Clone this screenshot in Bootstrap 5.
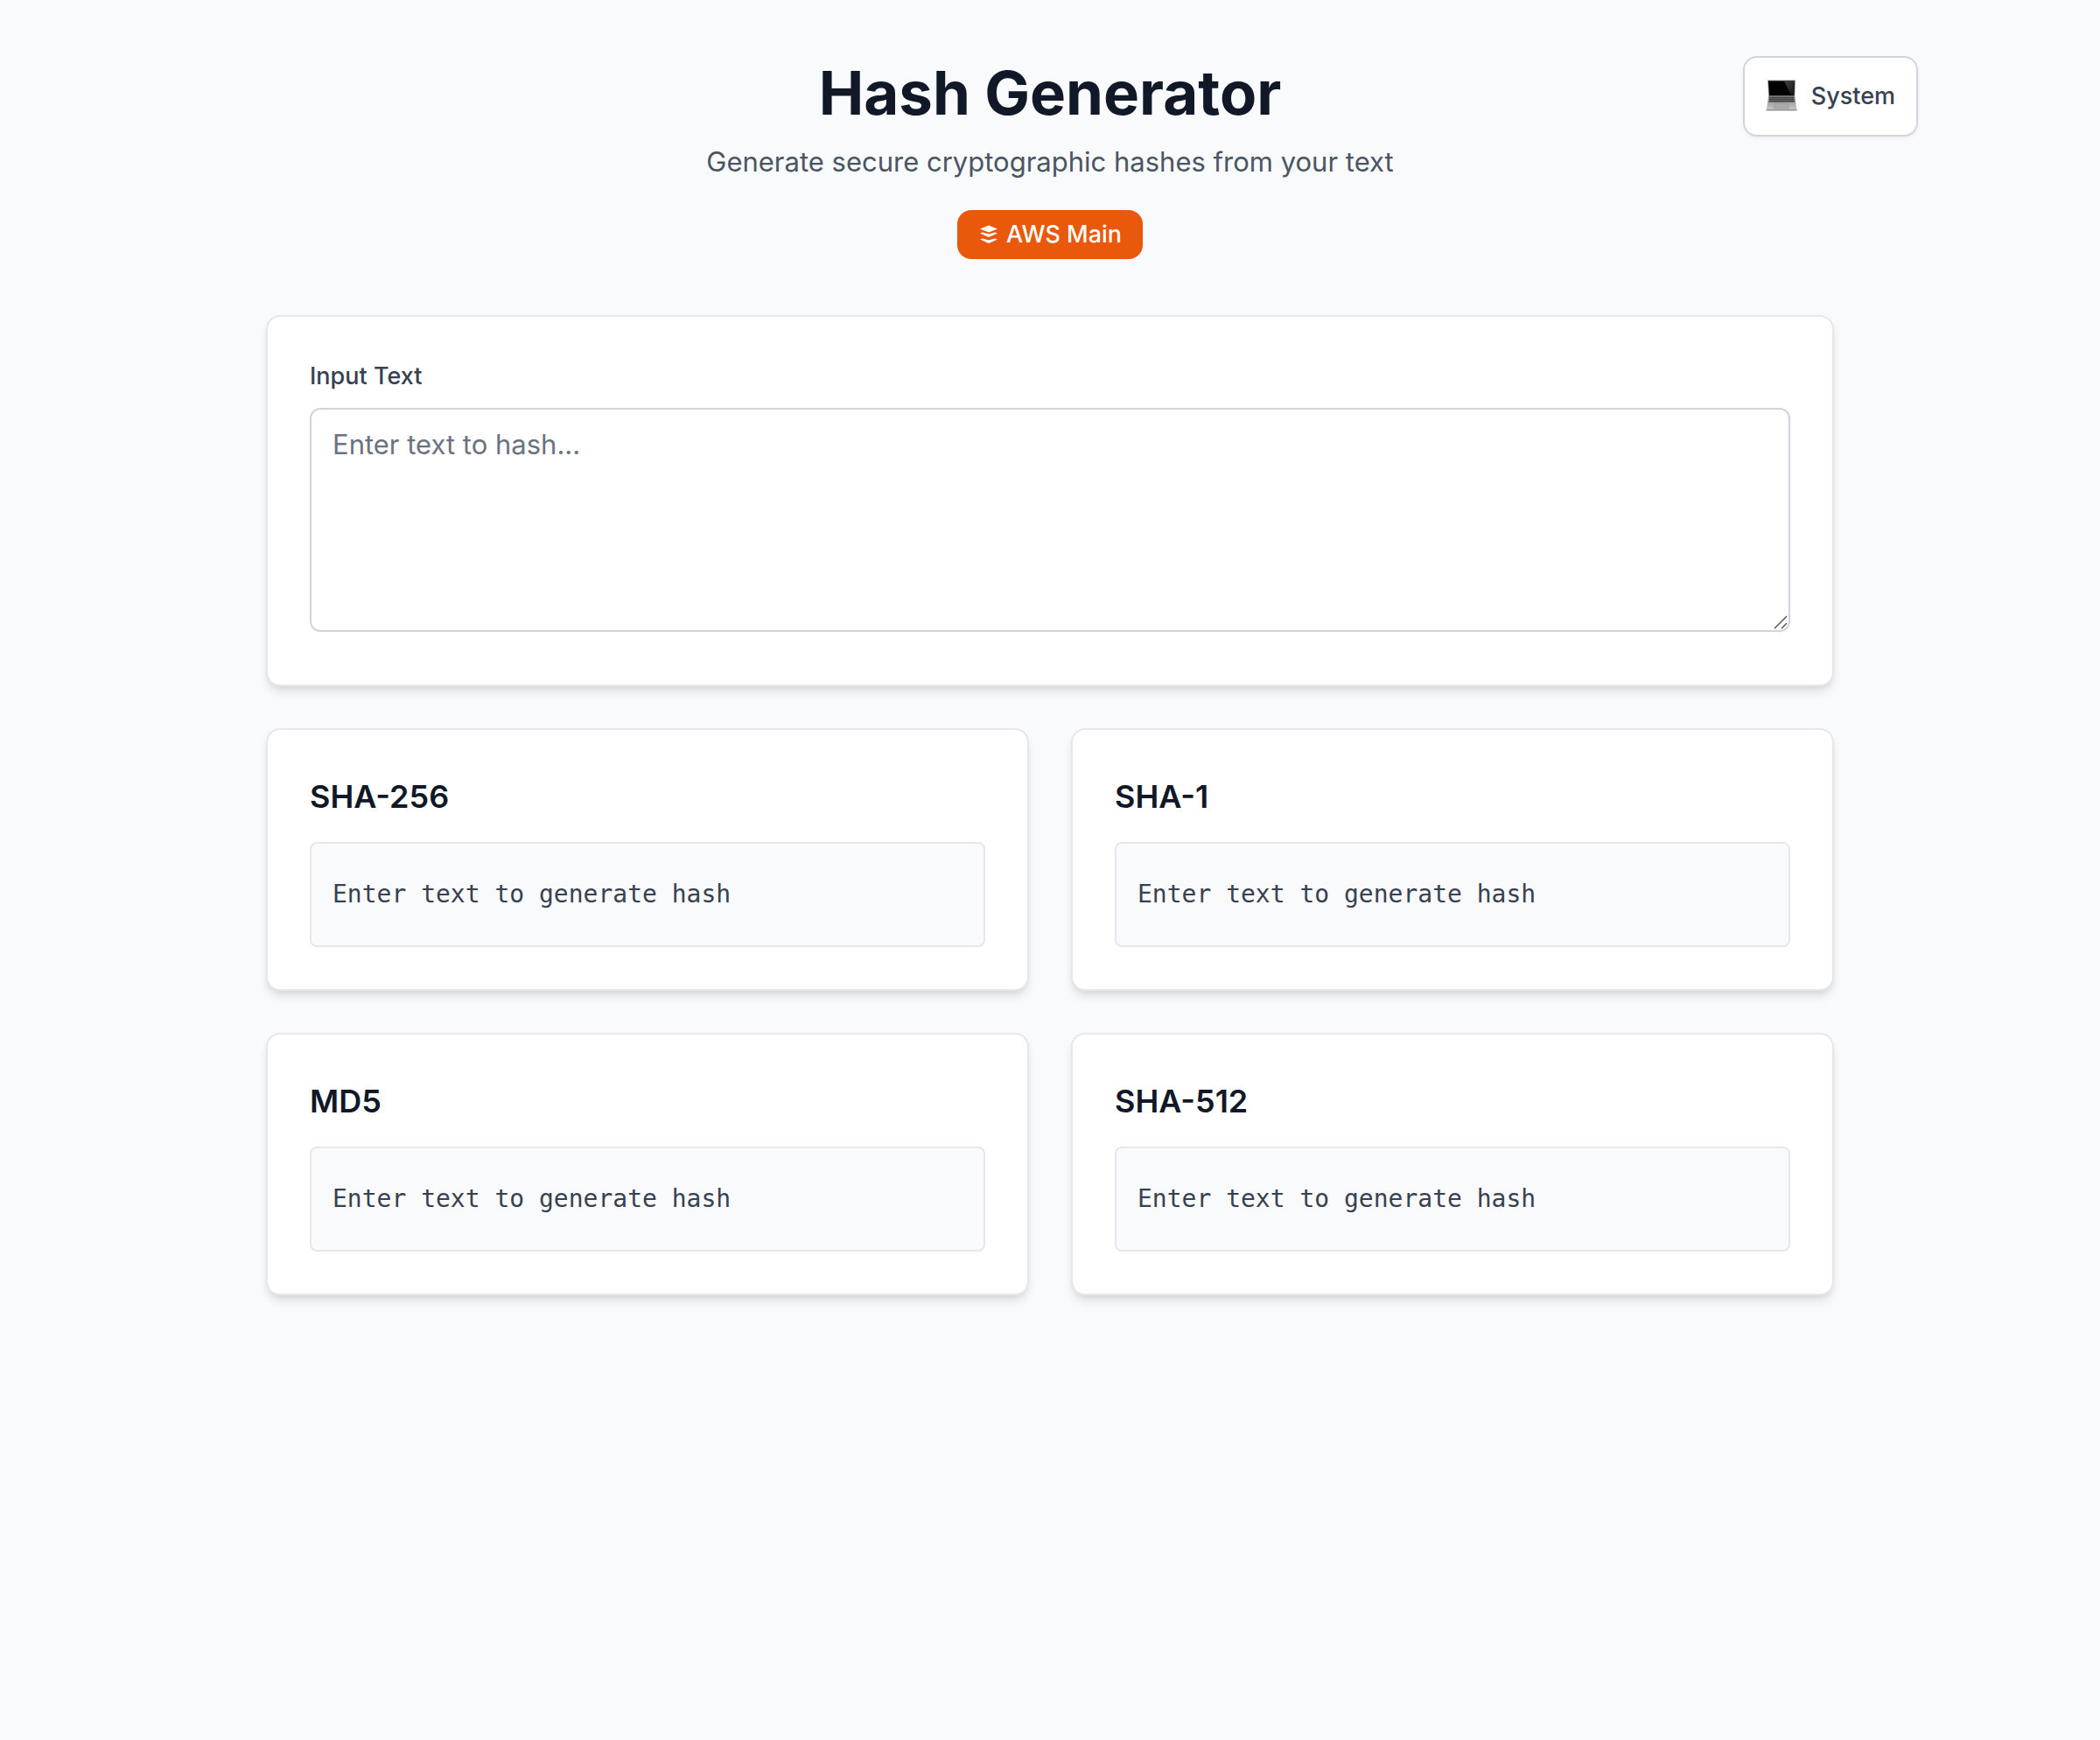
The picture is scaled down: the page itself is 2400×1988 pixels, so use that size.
<!DOCTYPE html>
<html lang="en">
<head>
<meta charset="utf-8">
<meta name="viewport" content="width=device-width, initial-scale=1">
<title>Hash Generator</title>
<link href="https://cdn.jsdelivr.net/npm/bootstrap@5.3.0/dist/css/bootstrap.min.css" rel="stylesheet">
<style>
  body { background: #f9fafb; color: #374151; font-family: Inter, "Liberation Sans", sans-serif; font-size: 27px; line-height: 40px; }
  .page-head { max-width: 2048px; padding: 64px 32px 0; }
  .head-grid { display: grid; grid-template-columns: 1fr auto 1fr; align-items: start; }
  .head-center { grid-column: 2; }
  .head-title { color: #111827; font-size: 69px; line-height: 84px; font-weight: 700; margin-bottom: 12px; }
  .head-sub { color: #4b5563; font-size: 31px; line-height: 50px; margin-bottom: 30px; }
  .source-badge { background: #ea580c; border-radius: 16px; padding: 8px 24px; gap: 8px; font-weight: 500; }
  .theme-btn { --bs-btn-color: #374151; --bs-btn-bg: #fff; --bs-btn-border-color: #d1d5db; --bs-btn-hover-bg: #f9fafb; --bs-btn-hover-border-color: #d1d5db; border-width: 2px; border-radius: 16px; padding: 24px; gap: 16px; font-size: 27px; line-height: 40px; font-weight: 500; box-shadow: 0 2px 4px rgba(0,0,0,.05); }
  .page-main { max-width: 1856px; padding: 64px 32px; }
  .panel { border: 2px solid #e5e7eb; border-radius: 16px; padding: 48px; box-shadow: 0 8px 12px -2px rgba(0,0,0,.1), 0 4px 8px -4px rgba(0,0,0,.1); }
  .field-label { font-weight: 500; margin-bottom: 16px; }
  .text-field { height: 256px; border: 2px solid #d1d5db; border-radius: 12px; padding: 16px 24px; font-size: 31px; line-height: 48px; resize: none; }
  .text-field::placeholder { color: #6b7280; }
  .grip { right: 2px; bottom: 6px; pointer-events: none; }
  .hash-row { --bs-gutter-x: 48px; --bs-gutter-y: 48px; }
  .hash-name { color: #111827; font-size: 36px; line-height: 56px; font-weight: 600; margin-bottom: 24px; }
  .hash-box { min-height: 120px; background: #f9fafb; border: 2px solid #e5e7eb; border-radius: 8px; padding: 24px; font-family: "DejaVu Sans Mono", monospace; font-size: 28px; line-height: 40px; }
</style>
</head>
<body>
<header class="page-head mx-auto">
  <div class="head-grid">
    <div class="head-center text-center d-flex flex-column align-items-center">
      <h1 class="head-title">Hash Generator</h1>
      <p class="head-sub">Generate secure cryptographic hashes from your text</p>
      <div class="source-badge text-white d-inline-flex align-items-center">
        <svg width="24" height="24" viewBox="0 0 24 24" fill="#fff" aria-hidden="true">
          <path d="M12 1.500 22 5.500 12 9.500 2 5.500z"/>
          <path d="M2 10.500 5 9.600 12 11.500l7-1.900 3 .9-10 4.500z"/>
          <path d="M2 17.500 5 16.600 12 18.500l7-1.900 3 .9-10 4.500z"/>
        </svg>
        <span>AWS Main</span>
      </div>
    </div>
    <button type="button" class="btn theme-btn d-inline-flex align-items-center ms-auto">
      <svg width="36" height="40" viewBox="0 0 36 40" aria-hidden="true">
        <defs>
          <linearGradient id="deck" x1="0" y1="0" x2="0" y2="1"><stop offset="0" stop-color="#858585"/><stop offset="1" stop-color="#c8c8c8"/></linearGradient>
          <linearGradient id="glare" x1="0" y1="0" x2="1" y2="1"><stop offset="0" stop-color="#444"/><stop offset="1" stop-color="#111"/></linearGradient>
        </defs>
        <path d="M2 1.500h32l-.8 19H3.200z" fill="#999"/>
        <path d="M3 2.500h30l-.7 17H4z" fill="#000"/>
        <path d="M21 2.500h12l-.7 17h-3z" fill="url(#glare)"/>
        <path d="M3.200 19.500h30l2.300 16H.8z" fill="url(#deck)"/>
        <path d="M4.200 20.500h28l.8 6.500H3.500z" fill="#666"/>
        <path d="M4.500 21.500h27.500M4.200 23.500h28M4 25.500h28.500" stroke="#333" stroke-width="1.200" stroke-dasharray="1.500 .6"/>
        <path d="M10 28.500h16l.5 5.500h-17z" fill="#aaa" stroke="#999" stroke-width=".6"/>
        <path d="M.6 35h35v1.500H.6z" fill="#909090"/>
      </svg>
      <span>System</span>
    </button>
  </div>
</header>
<main class="page-main mx-auto">
  <section class="panel bg-white mb-5">
    <label class="field-label d-block" for="source-text">Input Text</label>
    <div class="position-relative mb-2 pb-1">
      <textarea class="form-control text-field" id="source-text" placeholder="Enter text to hash..."></textarea>
      <svg class="grip position-absolute" width="18" height="18" viewBox="0 0 18 18" fill="none" stroke="#555" stroke-width="1.500" aria-hidden="true"><path d="M2 16 16 2M10 16l6-6"/></svg>
    </div>
  </section>
  <div class="row hash-row">
    <div class="col-12 col-lg-6"><section class="panel bg-white"><h2 class="hash-name">SHA-256</h2><div class="hash-box d-flex align-items-center">Enter text to generate hash</div></section></div>
    <div class="col-12 col-lg-6"><section class="panel bg-white"><h2 class="hash-name">SHA-1</h2><div class="hash-box d-flex align-items-center">Enter text to generate hash</div></section></div>
    <div class="col-12 col-lg-6"><section class="panel bg-white"><h2 class="hash-name">MD5</h2><div class="hash-box d-flex align-items-center">Enter text to generate hash</div></section></div>
    <div class="col-12 col-lg-6"><section class="panel bg-white"><h2 class="hash-name">SHA-512</h2><div class="hash-box d-flex align-items-center">Enter text to generate hash</div></section></div>
  </div>
</main>
<script src="https://cdn.jsdelivr.net/npm/bootstrap@5.3.0/dist/js/bootstrap.bundle.min.js"></script>
</body>
</html>
